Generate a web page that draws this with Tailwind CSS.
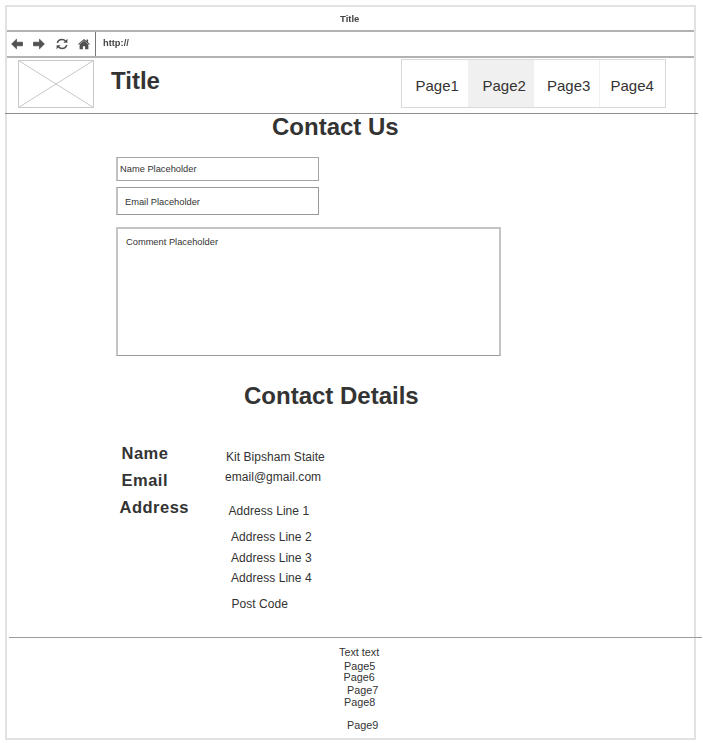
<!DOCTYPE html>
<html lang="en">
<head>
<meta charset="utf-8">
<title>Contact Us</title>
<script src="https://cdn.jsdelivr.net/npm/@tailwindcss/browser@4"></script>
</head>
<body class="w-[703px] h-[743px] overflow-hidden bg-white p-[5px] font-['Liberation_Sans',Arial,sans-serif] text-[#333] whitespace-nowrap">
<div class="w-[691px] h-[735px] border-2 border-[#e2e2e2] flex flex-col">
  <div class="h-[25px] shrink-0 border-b-2 border-[#b2b2b2] pl-[333px] pt-[7px] text-[9.5px] leading-[9px] font-bold text-[#444]"><span class="block blur-[0.5px]">Title</span></div>
  <div class="h-[26px] shrink-0 border-b-2 border-[#b2b2b2] flex">
    <div class="w-[89px] border-r border-[#777] flex pl-[4px] pt-[6px] gap-[10px] text-[#505050]">
      <svg class="w-[12px] h-[12px] shrink-0 blur-[0.5px]" viewBox="0 0 12 12" fill="currentColor" stroke="currentColor" stroke-width=".8" stroke-linejoin="round"><path d="M0.600 6 5.500 1.200V4.200h6v3.600h-6v3z"/></svg>
      <svg class="w-[12px] h-[12px] shrink-0 blur-[0.5px]" viewBox="0 0 12 12" fill="currentColor" stroke="currentColor" stroke-width=".8" stroke-linejoin="round"><path d="M11.400 6 6.500 1.200V4.200h-6v3.600h6v3z"/></svg>
      <svg class="w-[12px] h-[12px] shrink-0 ml-[1px] blur-[0.5px]" viewBox="0 0 12 12"><path d="M1.300 5C1.900 2.700 3.700 1.500 6 1.500c1.500 0 2.700.6 3.600 1.700M10.700 7C10.100 9.300 8.300 10.500 6 10.500c-1.500 0-2.700-.6-3.600-1.700" fill="none" stroke="currentColor" stroke-width="1.500"/><path d="M11.400.8v4H7.400zM.6 11.200v-4h4z" fill="currentColor"/></svg>
      <svg class="w-[12px] h-[12px] shrink-0 blur-[0.5px]" viewBox="0 0 12 12" fill="currentColor"><path d="M6 .9 8.500 3V1.500h1.600v2.900l1.800 1.600-.7.800L6 2.400.8 6.800.1 6z"/><path d="M6 2.800 10.400 6.600v4.600H7.100V8.200H4.900v3H1.600V6.600z"/></svg>
    </div>
    <span class="block pl-[7px] pt-[7px] text-[9.3px] leading-[9px] font-bold text-[#444] blur-[0.5px]">http://</span>
  </div>
  <header class="h-[56px] shrink-0 -ml-[2px] w-[693px] border-b border-[#8f8f8f] flex items-start">
    <svg class="ml-[13px] mt-[2px] w-[76px] h-[48px] shrink-0" viewBox="0 0 76 48" fill="none" stroke="#c8c8c8"><path d="M.5.5h75v47H.5zM.5.5l75 47M75.500.5l-75 47"/></svg>
    <h1 class="ml-[17px] mt-[11px] w-[290px] text-[24px] leading-[24px] font-bold">Title</h1>
    <nav class="mt-px w-[265px] h-[49px] shrink-0 border border-[#d9d9d9] flex text-[15px] leading-[15px]">
      <a class="w-[66px] pl-[13.500px] pt-[18px]">Page1</a>
      <a class="w-[66px] pl-[14.500px] pt-[18px] bg-[#f0f0f0]">Page2</a>
      <a class="w-[66px] pl-[13px] pt-[18px] border-r border-[#f0f0f0]">Page3</a>
      <a class="w-[65px] pl-[10.500px] pt-[18px]">Page4</a>
    </nav>
  </header>
  <main class="h-[523px] shrink-0 pl-[109px] pt-px">
    <h2 class="ml-[156px] text-[24px] leading-[24px] font-bold">Contact Us</h2>
    <form class="mt-[18px] text-[9.3px] leading-[10px]">
      <div class="w-[203px] h-[24px] border border-l-2 border-[#a5a5a5] border-l-[#c2c2c2] pl-[2px] pt-[6px]">Name Placeholder</div>
      <div class="mt-[6px] w-[203px] h-[28px] border border-l-2 border-[#999] border-l-[#c2c2c2] pl-[7px] pt-[9px]">Email Placeholder</div>
      <div class="mt-[12px] w-[385px] h-[129px] border-2 border-b border-[#c4c4c4] border-b-[#999] pl-[8px] pt-[8px]">Comment Placeholder</div>
    </form>
    <h2 class="mt-[28px] ml-[128px] text-[24px] leading-[24px] font-bold">Contact Details</h2>
    <div class="flex mt-[37px]">
      <dl class="w-[109px] text-[16.5px] leading-[17px] font-bold tracking-[0.5px] flex flex-col gap-[10px] pl-[5.500px]">
        <dt>Name</dt><dt>Email</dt><dt class="-ml-[2px]">Address</dt>
      </dl>
      <div class="text-[12px] leading-[12px] pt-[6px] tracking-[0.04px]">
        <p class="ml-[1px]">Kit Bipsham Staite</p>
        <p class="mt-[8px]">email@gmail.com</p>
        <p class="mt-[22px] ml-[3.500px]">Address Line 1</p>
        <p class="mt-[14px] ml-[6px]">Address Line 2</p>
        <p class="mt-[9px] ml-[6px]">Address Line 3</p>
        <p class="mt-[8px] ml-[6px]">Address Line 4</p>
        <p class="mt-[14px] ml-[6.500px]">Post Code</p>
      </div>
    </div>
  </main>
  <footer class="ml-[2px] w-[693px] border-t border-[#9b9b9b] pl-[330px] text-[10.8px] leading-[11px]">
    <p class="mt-[9px]">Text text</p>
    <p class="mt-[3px] ml-[5px]">Page5</p>
    <p class="ml-[4.500px]">Page6</p>
    <p class="mt-[2px] ml-[8px]">Page7</p>
    <p class="mt-[1px] ml-[5px]">Page8</p>
    <p class="mt-[12px] ml-[8px]">Page9</p>
  </footer>
</div>
</body>
</html>
